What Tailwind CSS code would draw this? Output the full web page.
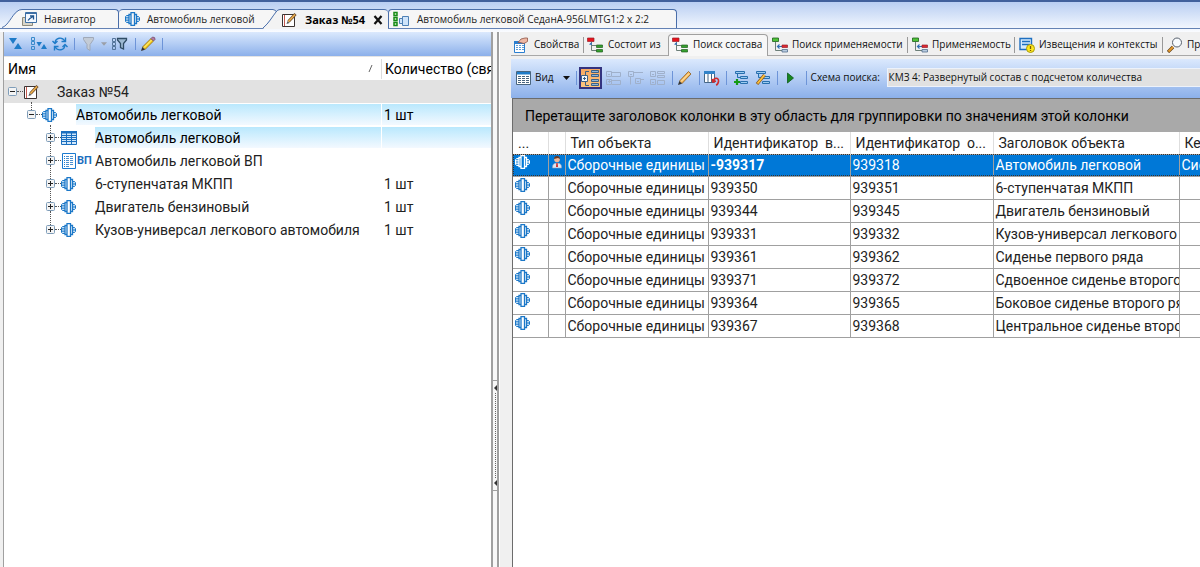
<!DOCTYPE html>
<html lang="ru">
<head>
<meta charset="utf-8">
<title>Заказ №54</title>
<script src="https://cdn.jsdelivr.net/npm/@tailwindcss/browser@4"></script>
</head>
<body class="flex h-screen flex-col overflow-hidden bg-[#f0f0f0] font-['Roboto','Liberation_Sans',sans-serif] text-sm text-[#222]">

<svg class="hidden" aria-hidden="true">
  <!-- assembly unit -->
  <symbol id="asm" viewBox="0 0 16 14"><path fill="#8cc0ea" opacity=".5" d="M1 4H4V10H1ZM11 4H14V10H11Z"/><path fill="none" stroke="currentColor" stroke-width="1.300" d="M4 2.500H6V11.500H4ZM6 .7H9.500V13.300H6ZM9.500 2.500H11.500V11.500H9.500"/><path fill="none" stroke="currentColor" d="M4 3.500H1.500L.5 4.500V9.500L1.500 10.500H4M.5 5.800H4M.5 8.200H4M11.500 4.500H13.500L14.500 5.500V8.500L13.500 9.500H11.500M11.500 7H14.500"/></symbol>
  <symbol id="order" viewBox="0 0 16 16"><path fill="#fff" stroke="#3c3432" d="M1.500 2.500H13.500V14.500H1.500Z"/><path stroke="#c45a50" fill="none" d="M3.500 3V14"/><path fill="#555" d="M5.500 12L6.500 9L8.500 11Z"/><path stroke="#6b4a2a" stroke-width="3" d="M7.500 9.500L14.500 2"/><path stroke="#efb04c" stroke-width="1.600" d="M7.500 9.500L14 2.500"/></symbol>
  <symbol id="nav" viewBox="0 0 16 16"><path fill="#d9d5c8" stroke="#8d8a7c" d="M.5 6.500H10.500V14.500H.5Z"/><path fill="#f3f8ff" stroke="#3d6fa5" d="M3.500 1.500H14.500V11.500H3.500Z"/><path stroke="#3d6fa5" d="M3 2.500H15"/><path fill="none" stroke="#20558f" stroke-width="1.300" d="M6 9.500C7 7.500 8 7 11 5.500M8 5H11.500V8.500"/></symbol>
  <symbol id="cmp" viewBox="0 0 16 16"><path fill="#d6f5c8" stroke="#178a17" stroke-width="1.500" d="M1 1.500H4V4.500H1ZM1 6.500H4V9.500H1ZM1 11.500H4V14.500H1Z"/><path fill="#cfe4fa" stroke="#4f81b5" d="M6.500 7.500H9.500V12.500H6.500ZM9.500 5.500H15.500V14.500H9.500Z"/></symbol>
  <symbol id="tri" viewBox="0 0 16 16"><path fill="#1e7bc8" d="M1 2H9L5 8ZM6 13H14L10 7Z"/></symbol>
  <symbol id="tri2" viewBox="0 0 18 16"><path fill="none" stroke="#3a8bcb" d="M1.500 1.500H4.500V4.500H1.500ZM1.500 5.500H4.500V8.500H1.500ZM1.500 10.500H4.500V13.500H1.500Z"/><path fill="#1e7bc8" d="M6.500 6H12L9 10.500ZM11 13H17L14 8Z"/></symbol>
  <symbol id="refresh" viewBox="0 0 16 16"><g fill="none" stroke="#1e7bc8" stroke-width="1.400"><path d="M3 7C3.500 1.500 10 .5 12.800 5M13 9C12.500 14.500 6 15.500 3.200 11"/><path d="M.5 5L3 7.500L5.500 5M15.500 11L13 8.500L10.500 11M13.500 1.500V5.500H9.500M2.500 14.500V10.500H6.500"/></g></symbol>
  <symbol id="funnel" viewBox="0 0 16 16"><path fill="#c3cbd6" stroke="#a0a9b8" d="M2.500 1.500H12.500V3.500L9 8.500V14.500L6 12.500V8.500L2.500 3.500Z"/></symbol>
  <symbol id="funnel2" viewBox="0 0 18 16"><path fill="none" stroke="#54759b" d="M1.500 2.500H4.500V5.500H1.500ZM1.500 6.500H4.500V9.500H1.500ZM1.500 10.500H4.500V13.500H1.500Z"/><path fill="#9db9d3" stroke="#2f4c66" stroke-width="1.300" d="M6.500 2.500H15.500V4L12.500 7.500V13L9.500 11.500V7.500L6.500 4Z"/></symbol>
  <symbol id="pen" viewBox="0 0 16 16"><path fill="#f8cf1c" stroke="#8a6312" stroke-width=".8" d="M2.500 11L11 2.500L13.500 5L5 13.500Z"/><path stroke="#fff39a" d="M4 11.500L11.500 4"/><path fill="#b37ba4" stroke="#75506e" stroke-width=".8" d="M11 2.500L12.500 1Q15.500 1 15 3.500L13.500 5Z"/><path fill="#333" d="M1 15L2.300 11L5 13.700Z"/></symbol>
  <symbol id="pen2" viewBox="0 0 16 16"><path fill="#f7b95b" stroke="#8b5a1d" stroke-width=".8" d="M2.500 11L11.500 1.500L14 4L5 13.500Z"/><path stroke="#fff0c8" d="M4 11.500L12 3.500"/><path fill="#333" d="M1 15L2.300 11L5 13.700Z"/></symbol>
  <symbol id="sheet" viewBox="0 0 16 16"><path fill="#d3e8fa" stroke="#1b6fbf" d="M.5 1.500H15.500V14.500H.5Z"/><path fill="#1b6fbf" d="M0 1H16V3.500H0Z"/><path stroke="#1b6fbf" stroke-width="1" d="M1 5.500H15M1 7.500H15M1 9.500H15M1 11.500H15M5.500 3V14M10.500 3V14"/></symbol>
  <symbol id="list" viewBox="0 0 16 16"><path fill="#fff" stroke="#1b7ad0" d="M1.500 .5H14.500V15.500H1.500Z"/><path stroke="#4c90cf" d="M5 3.500H8M9 3.500H12M5 5.500H8M9 5.500H12M5 7.500H8M9 7.500H12M5 9.500H8M9 9.500H12M5 11.500H8M9 11.500H12M5 13.500H8"/><path stroke="#1b7ad0" d="M3.500 3V14" stroke-dasharray="1 1"/></symbol>
  <symbol id="view" viewBox="0 0 16 16"><path fill="#fff" stroke="#49657f" d="M.5 1.500H14.500V14.500H.5Z"/><path fill="#1e7bc8" d="M1 2H14V4.500H1Z"/><path stroke="#49657f" d="M2 6.500H5M6 6.500H9M10 6.500H13M2 8.500H5M6 8.500H9M10 8.500H13M2 10.500H5M6 10.500H9M10 10.500H13M2 12.500H5M6 12.500H9M10 12.500H13"/></symbol>
  <symbol id="props" viewBox="0 0 16 16"><path fill="#fff" stroke="#2b7fd0" d="M1.500 4.500H11.500V15.500H1.500Z"/><path fill="#2b7fd0" d="M1 4H12V7H1Z"/><path stroke="#5e9bd6" d="M3 8.500H5M6 8.500H8M9 8.500H11M3 10.500H5M6 10.500H8M9 10.500H11M3 12.500H5M6 12.500H8M9 12.500H11"/><path fill="#eeb7a4" stroke="#8e5548" stroke-width=".8" d="M5 5.500L8 2L12 1H14.500V4.500L11 6.500L7 5.500Z"/></symbol>
  <symbol id="down" viewBox="0 0 16 16"><path fill="none" stroke="#6c7f78" d="M4.500 5V13.500H10M4.500 8.500H9"/><path fill="#e8131c" stroke="#98202a" stroke-width=".7" d="M.5 1H7V4.500H.5Z"/><path fill="#36a02e" stroke="#1e5f1c" stroke-width=".7" d="M9.500 8H15.500V10.500H9.500ZM9.500 12.500H15.500V15H9.500Z"/><path fill="#2f6eb5" d="M2 7.500L4.500 5L5 8Z"/></symbol>
  <symbol id="up" viewBox="0 0 16 16"><path fill="none" stroke="#6c7f78" d="M3.500 5V13.500H10"/><path stroke="#2f6eb5" stroke-width="1.200" d="M6 9.500H10M7.500 7.500L5.500 9.500L7.500 11.500" fill="none"/><path fill="#4fc33a" stroke="#1e5f1c" stroke-width=".8" d="M.5 1H6.500V4.500H.5Z"/><path fill="#dc2832" stroke="#98202a" stroke-width=".7" d="M10 8H15.500V10.500H10Z"/><path fill="#b8cce0" stroke="#56708d" stroke-width=".8" d="M10 12.500H15.500V15H10Z"/></symbol>
  <symbol id="notice" viewBox="0 0 16 16"><path fill="#d6ebff" stroke="#1e6fc0" stroke-width="1.400" d="M1 1.500H12.500V12.500H1Z"/><path stroke="#1e6fc0" stroke-width="1.500" d="M3 4.500H11M3 7.500H11"/><circle cx="11.500" cy="11.500" r="4" fill="#ffe81c" stroke="#a79a12"/><path stroke="#7a5b00" stroke-width="1.300" d="M11.500 9V12M11.500 13V14"/></symbol>
  <symbol id="lens" viewBox="0 0 16 16"><path stroke="#5c3a12" stroke-width="3.200" d="M1 15L6 10"/><path stroke="#e59a2c" stroke-width="2" d="M1.500 14.500L6 10"/><circle cx="10" cy="5.500" r="4.500" fill="#f8fbfe" stroke="#58606c"/></symbol>
  <symbol id="group" viewBox="0 0 20 18"><path fill="#f4f7fb" stroke="#3c6186" d="M1.500 6.500H7.500V12.500H1.500Z"/><path stroke="#3c6186" fill="none" d="M3 9.500H6M4.500 8V11M5.500 6V2.500H9M5.500 13V16.500H9"/><path fill="#8fb6d8" stroke="#3c6186" d="M11.500 1.500H18.500V3.500H11.500ZM11.500 5.500H18.500V7.500H11.500ZM11.500 10.500H18.500V12.500H11.500ZM11.500 14.500H18.500V16.500H11.500Z"/></symbol>
  <symbol id="g1" viewBox="0 0 16 16"><path fill="none" stroke="#9fb0cb" d="M.5 1.500H5.500V6.500H.5ZM.5 9.500H5.500V14.500H.5ZM2 4.500H4M2 11.500H5M3.500 10V13M6 2.500H14.500V6.500H6M6 10.500H14.500V14.500H6"/></symbol>
  <symbol id="g2" viewBox="0 0 16 16"><path fill="none" stroke="#9fb0cb" d="M.5 1.500H5.500V6.500H.5ZM2 4.500H4M6 2.500H15M2.500 7V14.500M7.500 8.500H12.500V13.500H7.500ZM9 11.500H11M13 9.500H16"/></symbol>
  <symbol id="g3" viewBox="0 0 16 16"><path fill="none" stroke="#9fb0cb" d="M.5 1.500H5.500V6.500H.5ZM.5 9.500H5.500V14.500H.5ZM2 4.500H4M2 12.500H4M7.500 1.500H14.500V3.500H7.500ZM7.500 5.500H14.500V7.500H7.500ZM7.500 10.500H14.500V14.500H7.500Z"/></symbol>
  <symbol id="cols" viewBox="0 0 16 16"><path fill="#fff" stroke="#476786" d="M.5 1.500H10.500V12.500H.5ZM4 4V12M7.500 4V12"/><path fill="#3283c8" d="M0 1H11V4H0Z"/><path fill="none" stroke="#d02c2c" stroke-width="1.600" d="M8 9L9 12L12 11M9.500 11.500C9.500 7.500 15 7 14.500 11.500Q14 14.500 12 15"/></symbol>
  <symbol id="addtree" viewBox="0 0 16 16"><path fill="#9ccbf0" stroke="#286fae" d="M2.500 1.500H11.500V3.500H2.500ZM7.500 6.500H14.500V8.500H7.500ZM7.500 11.500H14.500V13.500H7.500ZM4.500 4V7.500H7"/><path stroke="#159a15" stroke-width="2.200" d="M1 12H7M4 9V15"/></symbol>
  <symbol id="edittree" viewBox="0 0 16 16"><path fill="#9ccbf0" stroke="#286fae" d="M1.500 1.500H10.500V3.500H1.500ZM7.500 6.500H14.500V8.500H7.500ZM7.500 11.500H14.500V13.500H7.500ZM3.500 4V7.500H7"/><path stroke="#8b5a1d" stroke-width="3.200" d="M2 14L9.500 5"/><path stroke="#ffc23c" stroke-width="1.800" d="M2.500 13.500L9.500 5"/></symbol>
  <symbol id="play" viewBox="0 0 10 14"><path fill="#17861f" stroke="#0d5a1a" stroke-width=".8" d="M1.500 2L7.500 7L1.500 12Z"/></symbol>
  <symbol id="person" viewBox="0 0 12 16"><circle cx="6" cy="4.500" r="2.800" fill="#f0b89a"/><path fill="#693a25" d="M3 4Q3 1 6 1T9 4L7 3Z"/><path fill="#dfe6f0" stroke="#8da0bd" stroke-width=".6" d="M1.500 13Q1 8 6 8T10.500 13Z"/><path fill="#d22f2f" d="M5.300 8H6.700L7 12H5Z"/></symbol>
  <symbol id="caret" viewBox="0 0 7 4"><path fill="currentColor" d="M0 0H7L3.500 4Z"/></symbol>
</svg>

<!-- document tabs -->
<nav class="flex h-8 shrink-0 border-t-2 border-[#41609c] bg-linear-to-b from-[#b9cef2] to-[#fafcff] font-['Open_Sans','Noto_Sans',sans-serif] text-[10px] text-[#222]" aria-label="Документы">
  <div class="flex h-[27px] flex-1 items-end border-b border-[#6482b4] pl-0.5">
    <svg class="h-[19px] w-5" viewBox="0 0 20 19" fill="#f6f6f6" stroke="#4a6ea9"><path stroke="none" d="M0 19C5 18 10 6 16 2L20 .5V19Z"/><path fill="none" d="M0 18.500C6 17 10 6 15 2.500Q17 .5 20 .5"/></svg>
    <button class="flex h-[19px] w-[97px] items-center gap-1.5 rounded-tr-sm border-t border-r border-[#4a6ea9] bg-[#f6f6f6]"><svg class="size-4"><use href="#nav"/></svg>Навигатор</button>
    <button class="flex h-[19px] w-[144px] items-center gap-1.5 rounded-tl-sm border-t border-[#4a6ea9] bg-[#f6f6f6] pl-1.5 text-[#222]"><svg class="h-3.5 w-4 text-[#1c78c8]"><use href="#asm"/></svg>Автомобиль легковой</button>
    <svg class="-mb-px h-5 w-[17px]" viewBox="0 0 17 20"><path fill="#f6f6f6" d="M0 0H10Q13 1 14 3L0 19Z"/><path fill="#f3f3f3" d="M0 20C6 14 10 7 13 3Q14 .5 17 .5V20Z"/><path fill="none" stroke="#4a6ea9" d="M0 .5H10Q13 1 13.500 3M0 19C6 14 9 8 13 3Q14.500 .5 17 .5"/></svg>
    <button class="-mb-px flex h-5 w-[108px] items-center gap-2 rounded-tr-sm border-t border-[#4a6ea9] bg-[#f3f3f3] pl-px text-[11px] font-bold text-black"><svg class="size-4"><use href="#order"/></svg>Заказ №54<svg class="size-2.5" viewBox="0 0 10 10"><path stroke="#111" stroke-width="2.200" d="M1.500 1L8.500 9M8.500 1L1.500 9"/></svg></button>
    <button class="flex h-[19px] w-[289px] items-center gap-2 rounded-t-sm border border-b-0 border-[#4a6ea9] bg-[#f6f6f6] pl-1"><svg class="size-4"><use href="#cmp"/></svg>Автомобиль легковой СеданA-956LMTG1:2 x 2:2</button>
  </div>
</nav>

<main class="flex min-h-0 flex-1">
  <!-- structure tree -->
  <section class="ml-[3px] flex w-[490px] shrink-0 flex-col overflow-hidden border-r-2 border-l border-[#a0a0a0] bg-white" aria-label="Структура заказа">
    <div class="flex h-6 shrink-0 items-center bg-linear-to-b from-[#dbe9fd] to-[#8cb0ea] pl-1" role="toolbar">
      <button class="mr-1.5 h-4" aria-label="Развернуть"><svg class="size-4"><use href="#tri"/></svg></button>
      <button class="mr-1 h-4" aria-label="Свернуть список"><svg class="h-4 w-[18px]"><use href="#tri2"/></svg></button>
      <button class="mr-1.5 h-4" aria-label="Обновить"><svg class="size-4"><use href="#refresh"/></svg></button>
      <span class="mr-1.5 h-3 w-px bg-[#6d94d8]"></span>
      <button class="mr-1 h-4" aria-label="Фильтр"><svg class="size-4"><use href="#funnel"/></svg></button>
      <button class="mr-1 h-1" aria-label="Меню фильтра"><svg class="h-1 w-1.5 text-[#9b9fa8]"><use href="#caret"/></svg></button>
      <button class="mr-1.5 h-4" aria-label="Настройка фильтра"><svg class="h-4 w-[18px]"><use href="#funnel2"/></svg></button>
      <span class="mr-1 h-3 w-px bg-[#6d94d8]"></span>
      <button class="mr-1.5 h-4" aria-label="Изменить"><svg class="size-4"><use href="#pen"/></svg></button>
      <span class="h-3 w-px bg-[#6d94d8]"></span>
    </div>
    <div class="flex h-6 shrink-0 items-center border-t border-[#e4e4e4] text-black">
      <span class="flex-1 pl-1">Имя</span>
      <svg class="mr-2 h-[7px] w-[5px]" viewBox="0 0 5 7"><path stroke="#666" d="M1 7L4 0"/></svg>
      <span class="w-[110px] overflow-hidden border-l border-[#dcdcdc] pl-[3px] whitespace-nowrap">Количество (связь)</span>
    </div>
    <ul role="tree" id="tree"></ul>
  </section>

  <!-- splitter -->
  <div class="flex w-[6px] shrink-0 flex-col items-center border-r-2 border-[#a0a0a0] bg-[#f8f8f8] pt-[348px]" role="separator">
    <div class="flex h-[111px] w-full flex-col items-center justify-between border-y border-[#a0a0a0] py-1">
      <svg class="h-1.5 w-[3px]" viewBox="0 0 3 6"><path fill="#333" d="M3 0V6L0 3Z"/></svg>
      <span class="h-[85px] border-l border-dotted border-[#666]"></span>
      <svg class="h-1.5 w-[3px]" viewBox="0 0 3 6"><path fill="#333" d="M3 0V6L0 3Z"/></svg>
    </div>
  </div>

  <!-- search panel -->
  <section class="flex min-w-0 flex-1 flex-col border-l border-white pl-[11px]" aria-label="Поиск состава">
    <div class="flex h-6 shrink-0 items-stretch overflow-hidden font-['Open_Sans','Noto_Sans',sans-serif] text-[10px] whitespace-nowrap text-[#111]" role="tablist">
      <button role="tab" class="flex w-[72px] shrink-0 items-center gap-[5px] border-b border-[#a8a8a8] pt-0.5 pl-0.5"><svg class="size-4"><use href="#props"/></svg>Свойства</button>
      <button role="tab" class="flex w-[85px] shrink-0 items-center gap-[5px] border-b border-[#a8a8a8] pt-0.5"><span class="h-4 w-px bg-[#999]"></span><svg class="-ml-0.5 size-4"><use href="#down"/></svg>Состоит из</button>
      <button role="tab" aria-selected="true" class="mt-0.5 flex w-[100px] shrink-0 items-center gap-[5px] rounded-t-sm border border-b-0 border-[#a0a0a0] bg-[#f7f7f7] pb-0.5 pl-[3px]"><svg class="size-4"><use href="#down"/></svg>Поиск состава</button>
      <button role="tab" class="flex w-[139px] shrink-0 items-center gap-1 border-b border-[#a8a8a8] pt-0.5 pl-1"><svg class="size-4"><use href="#up"/></svg>Поиск применяемости</button>
      <button role="tab" class="flex w-[107px] shrink-0 items-center gap-1 border-b border-[#a8a8a8] pt-0.5"><span class="h-4 w-px bg-[#999]"></span><svg class="size-4"><use href="#up"/></svg>Применяемость</button>
      <button role="tab" class="flex w-[148px] shrink-0 items-center gap-1 border-b border-[#a8a8a8] pt-0.5"><span class="h-4 w-px bg-[#999]"></span><svg class="size-4"><use href="#notice"/></svg>Извещения и контексты</button>
      <button role="tab" class="flex flex-1 shrink-0 items-center gap-1 border-b border-[#a8a8a8] pt-0.5"><span class="h-4 w-px bg-[#999]"></span><svg class="size-4 shrink-0"><use href="#lens"/></svg>Просмотр</button>
    </div>
    <div class="mt-[3px] flex h-[39px] shrink-0 items-center bg-linear-to-b from-[#dbe9fd] to-[#8cb0ea] pb-0.5 pl-[5px] font-['Open_Sans','Noto_Sans',sans-serif] text-[10px] text-[#111]" role="toolbar">
      <button class="mr-1.5 flex items-center gap-[3px]"><svg class="size-4"><use href="#view"/></svg>Вид<svg class="ml-1.5 h-1 w-[7px]"><use href="#caret"/></svg></button>
      <span class="h-3.5 w-px bg-[#6d94d8]"></span>
      <button class="mx-0.5 flex h-[22px] w-[23px] items-center justify-center border-2 border-[#33337f] bg-linear-to-b from-[#f8a860] to-[#fdc680]" aria-label="Группировка"><svg class="h-[18px] w-5 shrink-0"><use href="#group"/></svg></button>
      <button class="ml-0.5 h-4" aria-label="Вид 2" disabled><svg class="size-4"><use href="#g1"/></svg></button>
      <button class="ml-1.5 h-4" aria-label="Вид 3" disabled><svg class="size-4"><use href="#g2"/></svg></button>
      <button class="mr-1.5 ml-1.5 h-4" aria-label="Вид 4" disabled><svg class="size-4"><use href="#g3"/></svg></button>
      <span class="h-3.5 w-px bg-[#6d94d8]"></span>
      <button class="mr-1.5 ml-1 h-4" aria-label="Изменить"><svg class="size-4"><use href="#pen2"/></svg></button>
      <span class="h-3.5 w-px bg-[#6d94d8]"></span>
      <button class="mr-1.5 ml-1 h-4" aria-label="Сброс колонок"><svg class="size-4"><use href="#cols"/></svg></button>
      <span class="h-3.5 w-px bg-[#6d94d8]"></span>
      <button class="mx-1.5 h-4" aria-label="Добавить схему"><svg class="size-4"><use href="#addtree"/></svg></button>
      <button class="mr-1.5 h-4" aria-label="Изменить схему"><svg class="size-4"><use href="#edittree"/></svg></button>
      <span class="h-3.5 w-px bg-[#6d94d8]"></span>
      <button class="mr-2.5 ml-2 h-3.5" aria-label="Выполнить"><svg class="h-3.5 w-2.5"><use href="#play"/></svg></button>
      <span class="h-3.5 w-px bg-[#6d94d8]"></span>
      <label for="scheme" class="w-20 shrink-0 pl-1 whitespace-nowrap">Схема поиска:</label>
      <select id="scheme" class="h-[19px] min-w-0 flex-1 appearance-none border border-r-0 border-[#edf2fa] bg-[#e1e1e1] pl-px text-[10px]"><option>КМЗ 4: Развернутый состав с подсчетом количества</option></select>
    </div>
    <div class="ml-px min-h-0 flex-1 overflow-hidden border-t border-l border-[#6c6c6c] bg-white">
      <p class="flex h-[33px] items-center bg-[#a9a9a9] pl-3 text-black">Перетащите заголовок колонки в эту область для группировки по значениям этой колонки</p>
      <table class="w-[765px] table-fixed border-collapse whitespace-nowrap">
        <colgroup><col class="w-[35px]"><col class="w-[17px]"><col class="w-[143px]"><col class="w-[142px]"><col class="w-[143px]"><col class="w-[186px]"><col></colgroup>
        <thead><tr class="h-[22px] text-left [&>th]:border-r [&>th]:border-[#dedede] [&>th]:p-0 [&>th]:pl-[5px] [&>th]:leading-5 [&>th]:font-normal">
          <th>...</th><th></th><th>Тип объекта</th><th>Идентификатор&nbsp; в...</th><th>Идентификатор&nbsp; о...</th><th>Заголовок объекта</th><th>Кем создан</th></tr></thead>
        <tbody id="rows"></tbody>
      </table>
    </div>
  </section>
</main>

<script>
const tree = [
  [0, 'order', 'Заказ №54', '', 'gray'],
  [1, 'asm', 'Автомобиль легковой', '1 шт', 'blue'],
  [2, 'sheet', 'Автомобиль легковой', '', 'blue'],
  [2, 'list', 'Автомобиль легковой ВП', '', '', 'ВП'],
  [2, 'asm', '6-ступенчатая МКПП', '1 шт', ''],
  [2, 'asm', 'Двигатель бензиновый', '1 шт', ''],
  [2, 'asm', 'Кузов-универсал легкового автомобиля', '1 шт', ''],
];
const indent = ['pl-1', 'pl-[23px]', 'pl-[42px]'];
document.getElementById('tree').innerHTML = tree.map(([lvl, icon, text, qty, bg, tag], i) => {
  const hl = bg === 'blue' ? 'bg-linear-to-b from-[#b9e8fd] to-[#f3f9ff] text-black' : '';
  const guide = lvl ? `<span class="absolute bottom-full left-1 border-l border-dotted border-[#555] ${i > 2 ? 'h-3.5' : 'h-2'}"></span>` : '';
  return `<li role="treeitem" class="flex h-[23px] items-stretch ${indent[lvl]} ${bg === 'gray' ? 'bg-[#e2e2e2]' : ''}">
    <span class="relative my-[7px] size-[9px] shrink-0">${guide}
      <button class="block size-[9px]" aria-label="${lvl < 2 ? 'Свернуть' : 'Развернуть'}"><svg class="size-[9px]" viewBox="0 0 9 9"><rect x=".5" y=".5" width="8" height="8" rx="1" fill="#f4f4f4" stroke="#7f9db9"/><path stroke="#222" d="M2 4.500H7${lvl < 2 ? '' : 'M4.500 2V7'}"/></svg></button></span>
    <span class="mt-[11px] h-px w-1.5 shrink-0 border-t border-dotted border-[#555]"></span>
    <span class="flex w-[34px] shrink-0 items-center text-[11px] font-bold text-[#1b6fbf]"><svg class="${icon === 'asm' ? 'h-3.5 w-4' : 'size-4'} shrink-0 text-[#1c78c8]"><use href="#${icon}"/></svg>${tag || ''}</span>
    <span class="my-px flex flex-1 items-center ${hl}">${text}</span>
    <span class="my-px ml-px flex w-[109px] shrink-0 items-center pl-0.5 ${hl}">${qty}</span></li>`;
}).join('');

const rows = [
  ['-939317', '939318', 'Автомобиль легковой'],
  ['939350', '939351', '6-ступенчатая МКПП'],
  ['939344', '939345', 'Двигатель бензиновый'],
  ['939331', '939332', 'Кузов-универсал легкового автомобиля'],
  ['939361', '939362', 'Сиденье первого ряда'],
  ['939371', '939372', 'Сдвоенное сиденье второго ряда'],
  ['939364', '939365', 'Боковое сиденье второго ряда'],
  ['939367', '939368', 'Центральное сиденье второго ряда'],
];
document.getElementById('rows').innerHTML = rows.map(([a, b, t], i) => `
  <tr class="[&>td]:overflow-hidden [&>td]:border [&>td]:border-l-0 [&>td]:border-[#a0a0a0] [&>td]:p-0 [&>td]:pl-0.5 [&>td]:leading-5 ${i ? 'h-[23px]' : 'h-[22px] bg-[#0078d7] text-white outline-1 -outline-offset-1 outline-dotted outline-[#333]'}">
    <td><svg class="-mt-1.5 h-3.5 w-4 ${i ? 'text-[#1c78c8]' : 'text-white'}"><use href="#asm"/></svg></td>
    <td>${i ? '' : '<svg class="-mt-1 h-4 w-3"><use href="#person"/></svg>'}</td>
    <td>Сборочные единицы</td><td class="${i ? '' : 'font-bold'}">${a}</td><td>${b}</td><td>${t}</td><td>${i ? '' : 'Системный'}</td>
  </tr>`).join('');
</script>
</body>
</html>
